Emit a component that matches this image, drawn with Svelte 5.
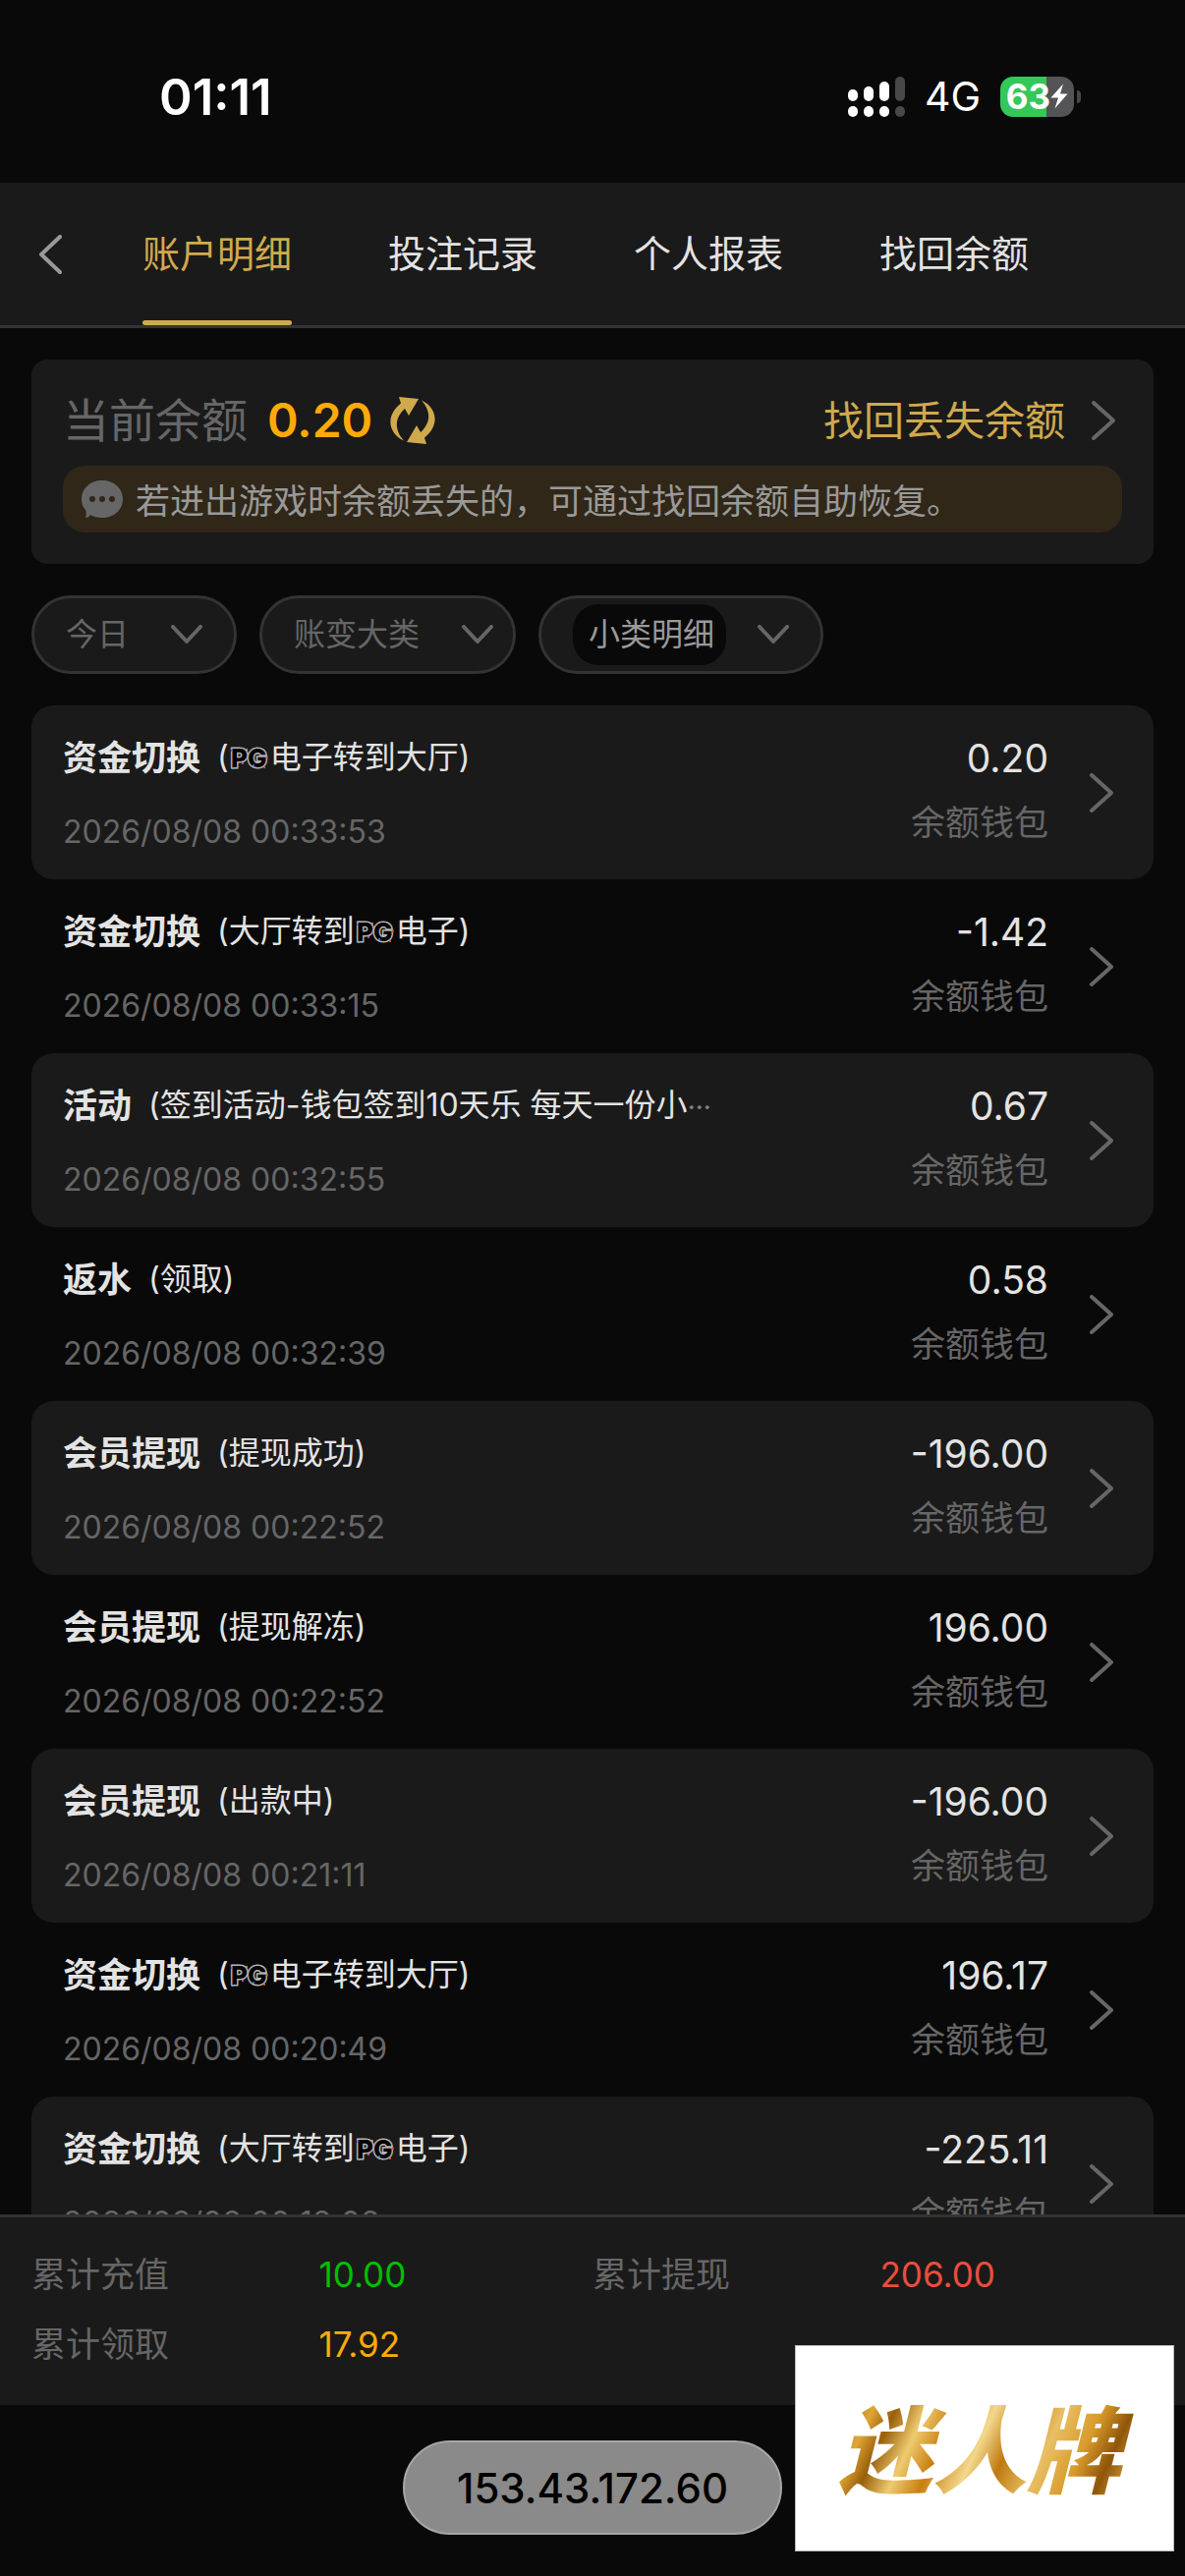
<script>
    const tabs = ['账户明细', '投注记录', '个人报表', '找回余额'];
    let activeTab = 0;

    const filters = [
        { label: '今日', name: '日期' },
        { label: '账变大类', name: '账变大类', wide: true },
        { label: '小类明细', name: '小类明细', picked: true }
    ];

    // {pg} in a detail is replaced by the provider badge
    const records = [
        { type: '资金切换', detail: '({pg}电子转到大厅)', time: '2026/08/08 00:33:53', amount: '0.20' },
        { type: '资金切换', detail: '(大厅转到{pg}电子)', time: '2026/08/08 00:33:15', amount: '-1.42' },
        { type: '活动', detail: '(签到活动-钱包签到10天乐 每天一份小', cut: true, time: '2026/08/08 00:32:55', amount: '0.67' },
        { type: '返水', detail: '(领取)', time: '2026/08/08 00:32:39', amount: '0.58' },
        { type: '会员提现', detail: '(提现成功)', time: '2026/08/08 00:22:52', amount: '-196.00' },
        { type: '会员提现', detail: '(提现解冻)', time: '2026/08/08 00:22:52', amount: '196.00' },
        { type: '会员提现', detail: '(出款中)', time: '2026/08/08 00:21:11', amount: '-196.00' },
        { type: '资金切换', detail: '({pg}电子转到大厅)', time: '2026/08/08 00:20:49', amount: '196.17' },
        { type: '资金切换', detail: '(大厅转到{pg}电子)', time: '2026/08/08 00:18:08', amount: '-225.11' }
    ];

    const totals = [
        { label: '累计充值', value: '10.00', tone: 'green' },
        { label: '累计提现', value: '206.00', tone: 'red' },
        { label: '累计领取', value: '17.92', tone: 'orange' }
    ];
</script>

<div class="page">
    <div class="status">
        <span class="clock">01:11</span>
        <div class="status-right">
            <svg class="signal" viewBox="0 0 58 41" aria-hidden="true">
                <g fill="#fff">
                    <rect x="0" y="13" width="10" height="12" rx="5" />
                    <rect x="16" y="10" width="10" height="15" rx="5" />
                    <rect x="32" y="5" width="10" height="20" rx="5" />
                    <rect x="0" y="30" width="10" height="11" rx="5" />
                    <rect x="16" y="30" width="10" height="11" rx="5" />
                    <rect x="32" y="30" width="10" height="11" rx="5" />
                </g>
                <g fill="#48484a">
                    <rect x="48" y="0" width="10" height="25" rx="5" />
                    <rect x="48" y="30" width="10" height="11" rx="5" />
                </g>
            </svg>
            <span class="network">4G</span>
            <div class="battery">
                <span>63</span>
                <svg viewBox="0 0 18 26" aria-hidden="true">
                    <path d="M13 0.500L0.500 14.500h7.500L4.500 25.500L17.500 10.500H10z" fill="#fff" />
                </svg>
            </div>
        </div>
    </div>

    <nav>
        <button class="back" aria-label="返回">
            <svg viewBox="0 0 24 40"><path d="M22 2L3 20L22 38" /></svg>
        </button>
        {#each tabs as tab, i}
            <button class="tab" class:active={i === activeTab} on:click={() => (activeTab = i)}>{tab}</button>
        {/each}
    </nav>

    <section class="balance">
        <div class="balance-row">
            <span class="balance-label">当前余额</span>
            <strong>0.20</strong>
            <button class="refresh" aria-label="刷新">
                <svg viewBox="0 0 48 50">
                    <path d="M10 1L30 3L20 20L16 13C8 20 3 32 15 45.500C-1 38-4 20 12 7.500z" />
                    <path d="M38 49L18 47L28 30L32 37C40 30 45 18 33 4.500C49 12 52 30 36 42.500z" />
                </svg>
            </button>
            <a class="recover" href="#recover">
                找回丢失余额
                <svg class="chevron" viewBox="0 0 26 40" aria-hidden="true"><path d="M3 2L23 20L3 38" /></svg>
            </a>
        </div>
        <div class="notice">
            <svg viewBox="0 0 42 38" aria-hidden="true">
                <path d="M21 0C33 0 42 8 42 19S33 38 21 38C16 38 12 37 9 35C8 37 6 38 4 38C5 35 5 32 4 30C1 27 0 23 0 19C0 8 9 0 21 0z" fill="#666" />
                <g fill="#302718">
                    <circle cx="11" cy="19" r="3" /><circle cx="21" cy="19" r="3" /><circle cx="31" cy="19" r="3" />
                </g>
            </svg>
            <span>若进出游戏时余额丢失的，可通过找回余额自助恢复。</span>
        </div>
    </section>

    <div class="filters">
        {#each filters as filter}
            <label class="filter" class:wide={filter.wide} class:picked={filter.picked}>
                <select aria-label={filter.name}>
                    <option>{filter.label}</option>
                </select>
                <svg viewBox="0 0 32 20" aria-hidden="true"><path d="M2 2L16 17L30 2" /></svg>
            </label>
        {/each}
    </div>

    <main>
        {#each records as record}
            <button class="record">
                <span class="info">
                    <span class="title">
                        <b>{record.type}</b>
                        <span class="detail">
                            {#each record.detail.split('{pg}') as part, i}{#if i > 0}<svg class="pg" viewBox="0 0 40 24">
                                <text x="1" y="21">PG</text>
                                <circle cx="2" cy="4" r="1" fill="#6a3df0" />
                                <circle cx="17" cy="3" r="1" fill="#ff9d2e" />
                                <circle cx="13" cy="17" r="1" fill="#f04be0" />
                                <circle cx="3" cy="22" r="1" fill="#30b8ff" />
                                <circle cx="24" cy="19" r="1" fill="#2f8cff" />
                                <circle cx="38" cy="11" r="1" fill="#f23b2f" />
                                <circle cx="35" cy="21" r="1" fill="#ff6a1f" />
                            </svg>{/if}{part}{/each}{#if record.cut}<span class="dots">…</span>{/if}
                        </span>
                    </span>
                    <span class="time">{record.time}</span>
                </span>
                <span class="sum">
                    <span class="amount">{record.amount}</span>
                    <span class="wallet">余额钱包</span>
                </span>
                <svg class="chevron" viewBox="0 0 26 40" aria-hidden="true"><path d="M3 2L23 20L3 38" /></svg>
            </button>
        {/each}
    </main>

    <footer>
        {#each totals as total}
            <div class="total">
                <span>{total.label}</span>
                <span class={total.tone}>{total.value}</span>
            </div>
        {/each}
    </footer>

    <div class="bottom">
        <button class="address">153.43.172.60</button>
    </div>

    <div class="brand"><span>迷人牌</span></div>
</div>

<style>
    :global(body) {
        background: #090909;
    }

    .page {
        position: relative;
        display: flex;
        flex-direction: column;
        height: 100vh;
        overflow: hidden;
        background: #090909;
        color: #e3e3e3;
        font-family: Inter, "Noto Sans CJK SC", sans-serif;
        font-size: 32px;
    }

    button, select {
        margin: 0;
        padding: 0;
        border: none;
        background: none;
        color: inherit;
        font: inherit;
    }

    svg {
        display: block;
        flex: none;
    }

    .status {
        flex: none;
        display: flex;
        align-items: center;
        justify-content: space-between;
        height: 186px;
        padding: 10px 113px 0 162px;
        box-sizing: border-box;
        color: #fff;
    }

    .clock {
        font-size: 51px;
        font-weight: 600;
    }

    .status-right {
        display: flex;
        align-items: center;
        gap: 20px;
    }

    .signal {
        width: 58px;
        height: 41px;
    }

    .network {
        font-size: 41px;
    }

    .battery {
        position: relative;
        display: flex;
        align-items: center;
        justify-content: center;
        width: 75px;
        height: 41px;
        border-radius: 13px;
        background: linear-gradient(90deg, #34c759 63%, #545456 63%);
        font-size: 35px;
        font-weight: 700;

        & svg {
            width: 18px;
            height: 26px;
        }

        &::after {
            content: '';
            position: absolute;
            left: 78px;
            width: 4px;
            height: 13px;
            border-radius: 0 4px 4px 0;
            background: #48484a;
        }
    }

    nav {
        flex: none;
        display: flex;
        gap: 98px;
        height: 148px;
        box-sizing: border-box;
        border-bottom: 3px solid #333;
        background: #1a1a1a;
    }

    .back {
        margin-right: -16px;
        padding-left: 39px;

        & svg {
            width: 24px;
            height: 40px;
            stroke: #999;
        }
    }

    svg path {
        stroke-linecap: round;
        stroke-linejoin: round;
    }

    .back path, .chevron path, .filter path {
        fill: none;
        stroke-width: 4;
    }

    .tab {
        position: relative;
        padding-bottom: 6px;
        font-size: 38px;

        &.active {
            color: #d0a94e;
        }

        &.active::after {
            content: '';
            position: absolute;
            left: 0;
            right: 0;
            bottom: 0;
            height: 5px;
            border-radius: 3px;
            background: #d0a94e;
        }
    }

    .chevron {
        width: 26px;
        height: 40px;
        stroke: #666;
    }

    .balance {
        flex: none;
        display: flex;
        flex-direction: column;
        height: 208px;
        margin: 32px 32px 0;
        padding: 20px 32px 32px;
        box-sizing: border-box;
        border-radius: 16px;
        background: #1a1a1a;
    }

    .balance-row {
        flex: 1;
        display: flex;
        align-items: center;
        padding-bottom: 4px;
        line-height: 64px;

        & strong {
            margin: 0 17px 0 20px;
            color: #ffaa09;
            font-size: 48px;
            font-weight: 600;
        }
    }

    .balance-label {
        color: #666;
        font-size: 47px;
    }

    .refresh svg {
        width: 48px;
        height: 50px;
        fill: #d0a94e;
    }

    .recover {
        display: flex;
        align-items: center;
        gap: 26px;
        margin-left: auto;
        padding-right: 6px;
        color: #d0a94e;
        font-size: 41px;
        text-decoration: none;
    }

    .notice {
        display: flex;
        align-items: center;
        gap: 13px;
        height: 68px;
        padding: 0 19px;
        border-radius: 22px;
        background: #302718;
        color: #999;
        font-size: 35px;

        & svg {
            width: 42px;
            height: 38px;
        }

        & span {
            padding-bottom: 2px;
        }
    }

    .filters {
        flex: none;
        display: flex;
        gap: 23px;
        margin: 32px;
    }

    .filter {
        display: flex;
        align-items: center;
        gap: 42px;
        height: 80px;
        padding: 0 32px;
        box-sizing: border-box;
        border: 3px solid #333;
        border-radius: 40px;
        background: #1a1a1a;
        color: #666;

        &.wide {
            padding-right: 20px;
        }

        &.picked {
            gap: 32px;
        }

        & select {
            appearance: none;
            line-height: 62px;
        }

        &.picked select {
            padding: 0 11px 0 16px;
            border-radius: 26px;
            background: #090909;
            color: #999;
        }

        & svg {
            width: 32px;
            height: 20px;
            stroke: #666;
        }
    }

    main {
        flex: 1;
        min-height: 0;
        overflow: hidden;
        padding: 0 32px;
    }

    .record {
        display: flex;
        align-items: center;
        width: 100%;
        height: 177px;
        padding: 0 40px 0 32px;
        border-radius: 22px;
        text-align: left;

        &:nth-child(odd) {
            background: #1a1a1a;
        }

        & .chevron {
            margin-left: 41px;
        }
    }

    .info {
        flex: 1;
        display: flex;
        flex-direction: column;
        gap: 28px;
        padding-top: 5px;
    }

    .title {
        display: flex;
        align-items: center;
        gap: 17px;
        height: 48px;
        line-height: 48px;

        & b {
            font-size: 35px;
        }
    }

    .detail {
        white-space: nowrap;
    }

    .pg {
        display: inline-block;
        width: 40px;
        height: 24px;
        margin: 0 1px;
        vertical-align: -2px;
        overflow: visible;

        & text {
            fill: #000;
            stroke: #b4b4b4;
            stroke-width: 3px;
            paint-order: stroke;
            font-size: 26px;
            font-weight: 800;
        }
    }

    .dots {
        color: #808080;
        font-family: "Noto Sans CJK SC", sans-serif;
        font-size: 24px;
        font-weight: 700;
        line-height: 24px;
    }

    .time {
        color: #666;
        line-height: 48px;
    }

    .sum {
        display: flex;
        flex-direction: column;
        gap: 17px;
        padding-bottom: 5px;
        text-align: right;
        line-height: 48px;
    }

    .amount {
        font-size: 39px;
    }

    .wallet {
        color: #666;
        font-size: 35px;
    }

    footer {
        flex: none;
        display: grid;
        grid-template-columns: 1fr 1fr;
        align-content: center;
        row-gap: 23px;
        height: 194px;
        padding: 0 32px 4px;
        box-sizing: border-box;
        border-top: 3px solid #333;
        background: #1a1a1a;
        font-size: 35px;
        line-height: 48px;
    }

    .total {
        display: grid;
        grid-template-columns: 1fr 1fr;
        column-gap: 14px;
        color: #666;
    }

    .green {
        color: #00bf00;
    }

    .red {
        color: #ea4e3d;
    }

    .orange {
        color: #ffaa09;
    }

    .bottom {
        flex: none;
        display: flex;
        justify-content: center;
        align-items: center;
        height: 174px;
        padding-bottom: 6px;
        box-sizing: border-box;
    }

    .address {
        height: 96px;
        padding: 0 53px;
        border: 2px solid #a6a6a6;
        border-radius: 48px;
        background: #8a8a8a;
        color: #000;
        font-size: 42px;
        font-weight: 500;
    }

    .brand {
        position: absolute;
        right: 11px;
        bottom: 25px;
        display: flex;
        align-items: center;
        justify-content: center;
        width: 386px;
        height: 210px;
        box-sizing: border-box;
        border: 1px solid #bbb;
        background: #fff;

        & span {
            padding: 0 22px 8px 12px;
            background: linear-gradient(115deg, #a66a0e 8%, #dfa637 16%, #9a5f0a 22%, #eecb70 30%, #c97f10 38%, #f3d88c 48%, #bf7a10 56%, #e8c066 66%, #d99a2a 76%, #8f560a 84%, #d9a23a 92%);
            background-clip: text;
            color: transparent;
            font-size: 96px;
            font-style: italic;
            font-weight: 900;
        }
    }
</style>
